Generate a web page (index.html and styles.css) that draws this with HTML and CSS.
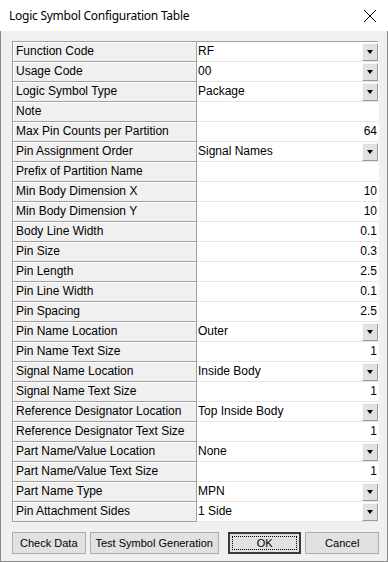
FILE: index.html
```html
<!DOCTYPE html>
<html lang="en">
<head>
    <meta charset="UTF-8">
    <title>Logic Symbol Configuration Table</title>
    <link rel="stylesheet" href="styles.css">
</head>
<body>
<div class="window">
    <div class="titlebar">
        <span class="title">Logic Symbol Configuration Table</span>
        <svg class="close" width="14" height="14" viewBox="0 0 14 14">
            <path d="M1 1 L13 13 M13 1 L1 13" stroke="#000" stroke-width="1" fill="none"/>
        </svg>
    </div>
    <div class="content">
        <div class="grid">
            <div class="label">Function Code</div><div class="value combo"><span>RF</span><b class="drop"></b></div>
            <div class="label">Usage Code</div><div class="value combo"><span>00</span><b class="drop"></b></div>
            <div class="label">Logic Symbol Type</div><div class="value combo"><span>Package</span><b class="drop"></b></div>
            <div class="label">Note</div><div class="value"></div>
            <div class="label">Max Pin Counts per Partition</div><div class="value num">64</div>
            <div class="label">Pin Assignment Order</div><div class="value combo"><span>Signal Names</span><b class="drop"></b></div>
            <div class="label">Prefix of Partition Name</div><div class="value"></div>
            <div class="label">Min Body Dimension X</div><div class="value num">10</div>
            <div class="label">Min Body Dimension Y</div><div class="value num">10</div>
            <div class="label">Body Line Width</div><div class="value num">0.1</div>
            <div class="label">Pin Size</div><div class="value num">0.3</div>
            <div class="label">Pin Length</div><div class="value num">2.5</div>
            <div class="label">Pin Line Width</div><div class="value num">0.1</div>
            <div class="label">Pin Spacing</div><div class="value num">2.5</div>
            <div class="label">Pin Name Location</div><div class="value combo"><span>Outer</span><b class="drop"></b></div>
            <div class="label">Pin Name Text Size</div><div class="value num">1</div>
            <div class="label">Signal Name Location</div><div class="value combo"><span>Inside Body</span><b class="drop"></b></div>
            <div class="label">Signal Name Text Size</div><div class="value num">1</div>
            <div class="label">Reference Designator Location</div><div class="value combo"><span>Top Inside Body</span><b class="drop"></b></div>
            <div class="label">Reference Designator Text Size</div><div class="value num">1</div>
            <div class="label">Part Name/Value Location</div><div class="value combo"><span>None</span><b class="drop"></b></div>
            <div class="label">Part Name/Value Text Size</div><div class="value num">1</div>
            <div class="label">Part Name Type</div><div class="value combo"><span>MPN</span><b class="drop"></b></div>
            <div class="label">Pin Attachment Sides</div><div class="value combo"><span>1 Side</span><b class="drop"></b></div>
        </div>
        <div class="buttons">
            <button class="btn w74">Check Data</button>
            <button class="btn w130">Test Symbol Generation</button>
            <button class="btn w74 default"><span class="focus">OK</span></button>
            <button class="btn w74">Cancel</button>
        </div>
    </div>
</div>
</body>
</html>
```

FILE: styles.css
```css
body
{
    margin: 0;
    font-family: "Liberation Sans", sans-serif;
    font-size: 12px;
}
.window
{
    width: 388px;
    height: 562px;
    display: flex;
    flex-direction: column;
    background: #f0f0f0;
}
.titlebar
{
    height: 31px;
    background: #fff;
    display: flex;
    align-items: center;
    justify-content: space-between;
    padding: 0 11px 0 9px;
    box-sizing: border-box;
}
.title
{
    font-family: "Noto Sans", sans-serif;
    font-size: 12px;
    letter-spacing: -0.25px;
    color: #000;
}
.close
{
    display: block;
}
.content
{
    flex: 1;
    border: 1px solid #8a8a8a;
    border-top: none;
    padding: 10px 8px 0 11px;
    display: flex;
    flex-direction: column;
}
.grid
{
    display: grid;
    grid-template-columns: 184px 182px;
    grid-auto-rows: 20px;
    border-left: 1px solid #a0a0a0;
    border-top: 1px solid #a0a0a0;
    width: 366px;
    box-sizing: border-box;
}
.label
{
    background: #f0f0f0;
    border-right: 1px solid #a0a0a0;
    border-bottom: 1px solid #a0a0a0;
    box-shadow: inset 1px 1px #fff;
    padding-left: 3px;
    line-height: 19px;
    white-space: nowrap;
    overflow: hidden;
    color: #000;
}
.value
{
    background: #fff;
    border-bottom: 1px solid #e6e6e6;
    padding: 0 2px 0 1px;
    line-height: 19px;
    white-space: nowrap;
    color: #000;
}
.num
{
    text-align: right;
}
.combo
{
    display: flex;
    justify-content: space-between;
    align-items: center;
}
.drop
{
    width: 16px;
    height: 18px;
    box-sizing: border-box;
    background: #e1e1e1;
    border: 1px solid #f8f8f8;
    border-right-color: #9a9a9a;
    border-bottom-color: #9a9a9a;
    display: flex;
    align-items: center;
    justify-content: center;
    margin-right: -1px;
}
.drop::after
{
    content: "";
    border-left: 3.5px solid transparent;
    border-right: 3.5px solid transparent;
    border-top: 4px solid #000;
}
.buttons
{
    display: flex;
    margin-top: 10px;
    gap: 4px;
}
.btn
{
    height: 22px;
    background: #e1e1e1;
    border: 1px solid #adadad;
    font-family: "Liberation Sans", sans-serif;
    font-size: 11px;
    color: #000;
    padding: 0;
    white-space: nowrap;
}
.w74
{
    width: 74px;
}
.w130
{
    width: 130px;
}
.btn.default
{
    margin-left: 5px;
    border: 2px solid #3a3a3a;
    padding: 2px;
    display: flex;
}
.focus
{
    flex: 1;
    border: 1px dotted #000;
    display: flex;
    align-items: center;
    justify-content: center;
}
```
